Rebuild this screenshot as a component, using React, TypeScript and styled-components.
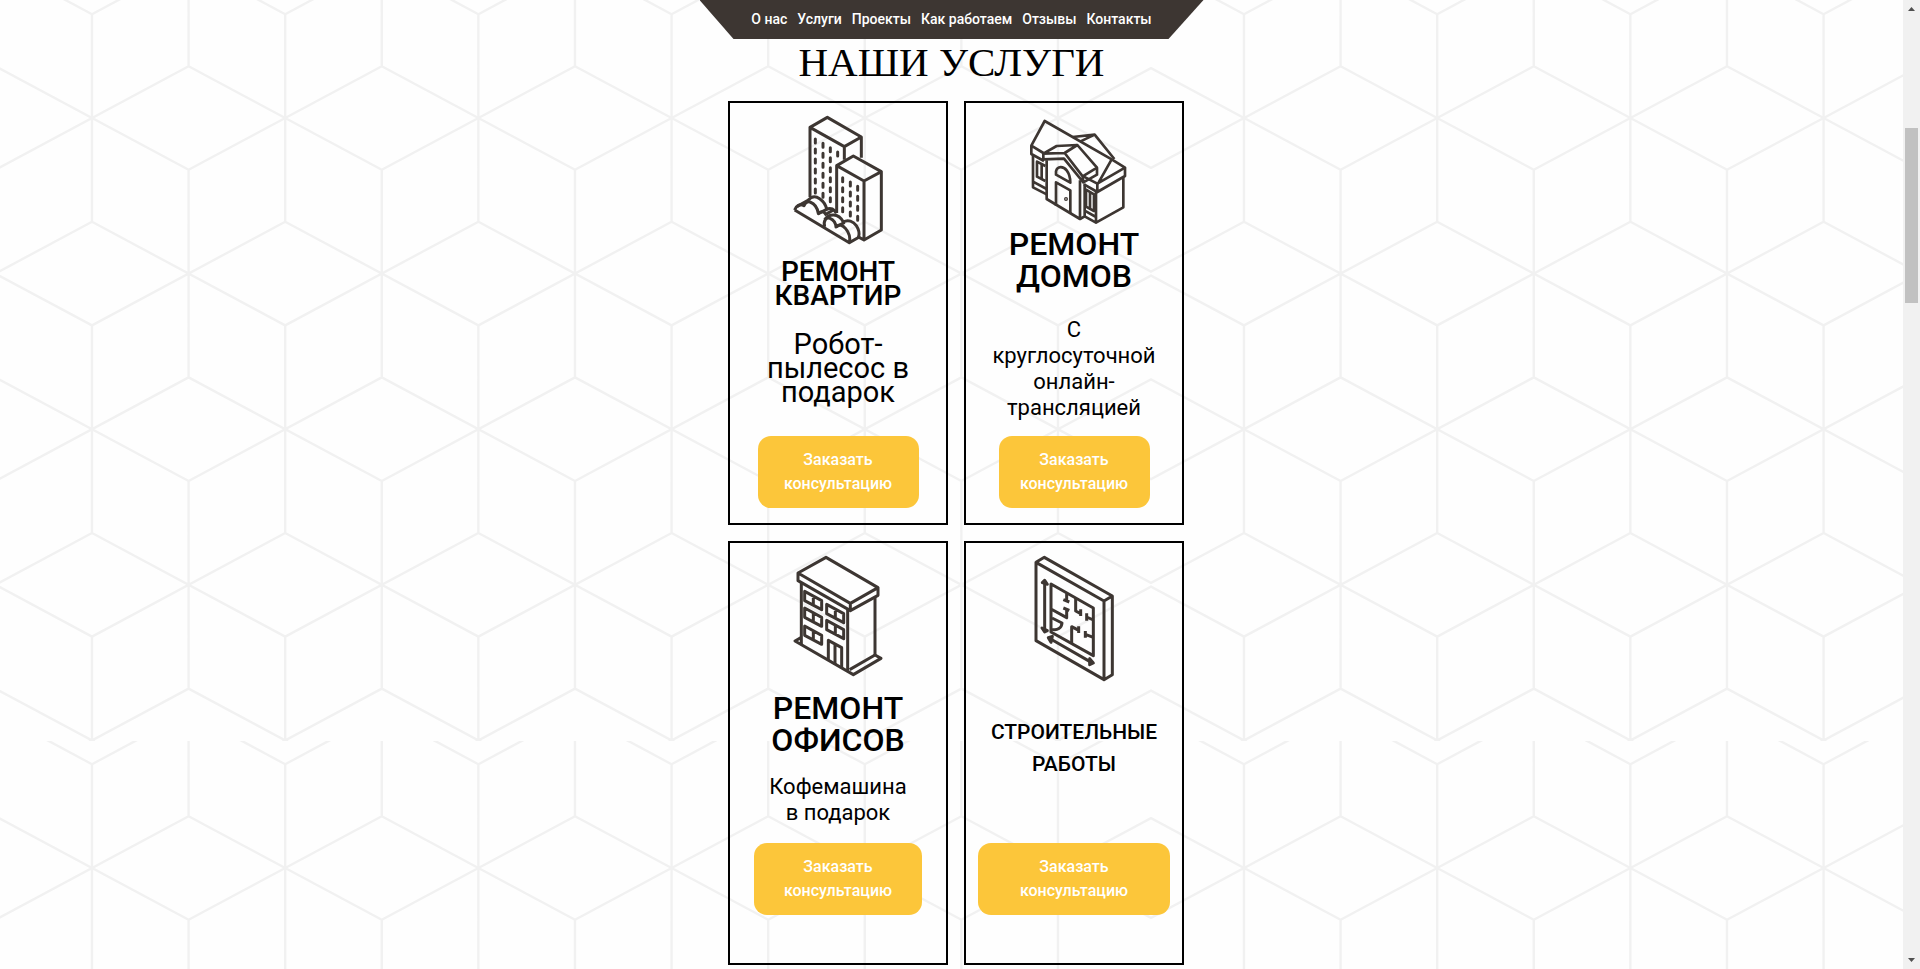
import React from "react";
import styled, { createGlobalStyle } from "styled-components";

const GlobalStyle = createGlobalStyle`
  *, *::before, *::after { box-sizing: border-box; }
  body {
    margin: 0;
    background: #fefefe;
    color: #000;
    font-family: Roboto, "Liberation Sans", sans-serif;
  }
`;

const Shell = styled.div`
  display: grid;
  grid-template-columns: minmax(0, 1fr) 17px;
  min-height: 100vh;
`;

const Page = styled.main`
  position: relative;
  isolation: isolate;
  display: flex;
  flex-direction: column;
  align-items: center;
  overflow: hidden;
`;

const Backdrop = styled.svg`
  position: absolute;
  inset: 0;
  z-index: -1;
  width: 100%;
  height: 100%;
`;

const Nav = styled.nav`
  display: flex;
  justify-content: center;
  align-items: center;
  gap: 10px;
  width: 504px;
  height: 39px;
  padding-bottom: 2px;
  background: #3d3632;
  clip-path: polygon(0 0, 100% 0, 469px 100%, 34px 100%);
`;

const NavLink = styled.a`
  color: #fff;
  font-size: 14px;
  line-height: 20px;
  font-weight: 500;
  text-decoration: none;
  white-space: nowrap;
`;

const Heading = styled.h1`
  margin: 0;
  font-family: "Liberation Serif", serif;
  font-size: 41px;
  line-height: 46px;
  font-weight: 400;
`;

const Services = styled.section`
  display: grid;
  grid-template-columns: repeat(2, 220px);
  grid-auto-rows: 424px;
  gap: 16px;
  padding: 16px 0 4px 9px;
`;

const Card = styled.article<{ $bottom: number }>`
  display: flex;
  flex-direction: column;
  align-items: center;
  padding: 11px 0 ${(p) => p.$bottom}px;
  border: 2px solid #000;
  text-align: center;
`;

const Icon = styled.svg`
  flex: none;
  fill: none;
  stroke: #3d3632;
  stroke-width: 9;
  stroke-linejoin: round;
`;

const Title = styled.h2<{ $size: number; $line: number; $top: number }>`
  margin: ${(p) => p.$top}px 0 0;
  font-size: ${(p) => p.$size}px;
  line-height: ${(p) => p.$line}px;
  font-weight: 500;
  white-space: pre-line;
`;

const Note = styled.p<{ $size: number; $line: number; $top: number }>`
  margin: ${(p) => p.$top}px 0 0;
  font-size: ${(p) => p.$size}px;
  line-height: ${(p) => p.$line}px;
  font-weight: 400;
  white-space: pre-line;
`;

const OrderButton = styled.button<{ $width: number }>`
  width: ${(p) => p.$width}px;
  height: 72px;
  margin-top: auto;
  padding: 12px 20px;
  border: 0;
  border-radius: 13px;
  background: #fcc63a;
  color: #fff;
  font-family: inherit;
  font-size: 16px;
  line-height: 24px;
  font-weight: 500;
  cursor: pointer;
`;

const ScrollTrack = styled.div`
  display: flex;
  flex-direction: column;
  align-items: center;
  justify-content: space-between;
  background: #f1f1f1;
`;

const ScrollTop = styled.div`
  display: flex;
  flex-direction: column;
  gap: 111px;
`;

const ScrollArrow = styled.svg`
  display: block;
  width: 13px;
  height: 17px;
  fill: #505050;
`;

const ScrollThumb = styled.div`
  width: 13px;
  height: 175px;
  background: #c1c1c1;
`;

/* One tile of the cube wallpaper: rows of six-pointed joints, every other row shifted by half a cell. */
const TILE_W = 1152;
const TILE_H = 750;
function cubePath() {
  const hw = 96.6;
  const hh = 51.8;
  const up = 103.8;
  let d = "";
  for (let r = -1; r < 6; r++) {
    for (let c = -1; c < 8; c++) {
      const x = 93 + c * hw * 2 + (r % 2 !== 0 ? hw : 0);
      const y = 127 + r * 155.6;
      d += `M${x} ${y - up}V${y + up}M${x - hw} ${y - hh}L${x + hw} ${y + hh}M${x - hw} ${y + hh}L${x + hw} ${y - hh}`;
    }
  }
  return d;
}

function Wallpaper() {
  return (
    <Backdrop aria-hidden="true">
      <defs>
        <pattern id="cubes" x="-1" y="-9" width={TILE_W} height={TILE_H} patternUnits="userSpaceOnUse">
          <path d={cubePath()} fill="none" stroke="#f1f1f1" strokeWidth="2.4" />
        </pattern>
      </defs>
      <rect width="100%" height="100%" fill="url(#cubes)" />
    </Backdrop>
  );
}

const dashes = (x: number, y: number, count: number) =>
  Array.from({ length: count }, (_, i) => `M${x} ${y + i * 30}v12`).join("");

const TowersIcon = () => (
  <Icon width="120" height="132" viewBox="174 57 360 396" aria-hidden="true">
    <path d="M270 306V97L322 67L424 126L373 155L270 97M373 155V194M424 126V188" />
    <path d="M350 354V212L400 183L484 230L432 258L350 212M432 258V435L484 405V230M432 435L412 424" />
    <path
      strokeLinecap="round"
      d={
        dashes(286, 132, 6) + dashes(309, 145, 6) + dashes(331, 158, 6) + dashes(353, 171, 1) +
        dashes(368, 248, 4) + dashes(391, 261, 4) + dashes(413, 274, 4)
      }
    />
    <path d="M224 345L388 443L418 426M224 345C228 332 240 325 252 332C256 322 262 319 270 321C283 326 293 340 295 356L320 343" />
    <path d="M232 334L264 316C275 303 288 303 299 311C311 319 318 332 320 343C332 336 343 343 349 355" />
    <path d="M295 356C304 347 312 349 317 358L340 345M314 396C309 378 318 366 330 370C340 374 347 385 348 396L374 382" />
    <path d="M314 374C326 356 355 352 370 381C384 372 400 379 409 392C417 404 419 415 416 427M348 396C358 386 368 390 377 401C388 414 391 430 388 443" />
  </Icon>
);

const HouseIcon = () => (
  <Icon width="120" height="114" viewBox="162 57 360 342" aria-hidden="true">
    <g strokeWidth="8">
      <path d="M250 174L214 152L254 78L455 193L495 218L412 266L370 244M214 152V177L252 198M455 193L416 262" />
      <path d="M495 218V243L412 291V266M412 291L372 268M338 126L404 119L463 192M360 140L404 119" />
      <path d="M250 176L290 153L352 150L314 174ZM250 176V193L312 191L370 262L411 239V218L368 244L314 174M411 218L352 150M368 244L370 262" />
      <path d="M260 196V312L360 372L374 364V266M360 372V256" />
      <path d="M219 180V277L260 298M219 260L260 282M256 258L231 245V200L256 213M245 208V250" />
      <path d="M288 332V262L331 286V354M288 239V229C292 212 310 213 320 226C330 239 331 250 331 263Z" />
      <circle cx="318" cy="312" r="2" />
      <path d="M374 364L408 383L490 337V247M408 383V290M378 284L402 298V348L378 335ZM390 291V342M374 347L408 366" />
    </g>
  </Icon>
);

const pane = (x: number, y: number) => `M${x} ${y}l51 28v27l-51-27zM${x + 26} ${y + 14}v27`;

const OfficeIcon = () => (
  <Icon width="120" height="132" viewBox="171 72 360 396" aria-hidden="true">
    <path d="M231 129L315 82L471 173L388 220ZM231 129V152L388 242L471 196V173M388 220V242" />
    <path d="M241 158V342M380 238V422M462 202V378" />
    <path d="M240 323L222 333L397 434L480 385L462 375L386 419" />
    <path d={pane(251, 184) + pane(251, 234) + pane(251, 288) + pane(317, 223) + pane(317, 271)} />
    <path d="M322 392V331L362 353V412M342 342V404" />
  </Icon>
);

const PlanIcon = () => (
  <Icon width="120" height="132" viewBox="162 72 360 396" aria-hidden="true">
    <path d="M228 97L432 213V449L228 332ZM228 97L253 82L457 198L432 213M457 198V434L432 449" />
    <path d="M273 162L400 234V377L273 306ZM320 188V213M310 209L328 216M273 237L320 263V238M310 234L328 241" />
    <path d="M347 204V243L362 251M362 238V258M380 250V272M380 261L400 270M276 264L306 279C305 294 292 302 276 298" />
    <path d="M335 340V290L356 301M356 289V309M376 303V323M376 313L400 322M254 158V300M272 327L394 397" />
    <path fill="#3d3632" d="M254 151L247 158L262 163ZM254 306L246 294L262 302ZM265 323L277 319L273 337ZM400 399L389 386V404Z" />
  </Icon>
);

interface TextSpec {
  text: string;
  size: number;
  line: number;
  top: number;
}

interface Service {
  id: string;
  icon: React.ReactNode;
  title: TextSpec;
  note?: TextSpec;
  buttonWidth: number;
  bottom: number;
}

const services: Service[] = [
  {
    id: "flats",
    icon: <TowersIcon />,
    title: { text: "РЕМОНТ\nКВАРТИР", size: 28, line: 24, top: 14 },
    note: { text: "Робот-\nпылесос в\nподарок", size: 29, line: 24, top: 24 },
    buttonWidth: 161,
    bottom: 15,
  },
  {
    id: "houses",
    icon: <HouseIcon />,
    title: { text: "РЕМОНТ\nДОМОВ", size: 32, line: 32, top: 0 },
    note: { text: "С\nкруглосуточной\nонлайн-\nтрансляцией", size: 22, line: 26, top: 25 },
    buttonWidth: 151,
    bottom: 15,
  },
  {
    id: "offices",
    icon: <OfficeIcon />,
    title: { text: "РЕМОНТ\nОФИСОВ", size: 32, line: 32, top: 6 },
    note: { text: "Кофемашина\nв подарок", size: 22, line: 26, top: 18 },
    buttonWidth: 168,
    bottom: 48,
  },
  {
    id: "construction",
    icon: <PlanIcon />,
    title: { text: "СТРОИТЕЛЬНЫЕ\nРАБОТЫ", size: 21, line: 32, top: 30 },
    buttonWidth: 192,
    bottom: 48,
  },
];

const links = ["О нас", "Услуги", "Проекты", "Как работаем", "Отзывы", "Контакты"];

export default function App() {
  return (
    <>
      <GlobalStyle />
      <Shell>
        <Page>
          <Wallpaper />
          <Nav>
            {links.map((label) => (
              <NavLink key={label} href="#">
                {label}
              </NavLink>
            ))}
          </Nav>
          <Heading>НАШИ УСЛУГИ</Heading>
          <Services>
            {services.map(({ id, icon, title, note, buttonWidth, bottom }) => (
              <Card key={id} $bottom={bottom}>
                {icon}
                <Title $size={title.size} $line={title.line} $top={title.top}>
                  {title.text}
                </Title>
                {note && (
                  <Note $size={note.size} $line={note.line} $top={note.top}>
                    {note.text}
                  </Note>
                )}
                <OrderButton type="button" $width={buttonWidth}>
                  Заказать консультацию
                </OrderButton>
              </Card>
            ))}
          </Services>
        </Page>
        <ScrollTrack aria-hidden="true">
          <ScrollTop>
            <ScrollArrow viewBox="0 0 13 17">
              <path d="M3 11h7L6.500 7z" />
            </ScrollArrow>
            <ScrollThumb />
          </ScrollTop>
          <ScrollArrow viewBox="0 0 13 17">
            <path d="M3 6h7L6.500 10z" />
          </ScrollArrow>
        </ScrollTrack>
      </Shell>
    </>
  );
}
